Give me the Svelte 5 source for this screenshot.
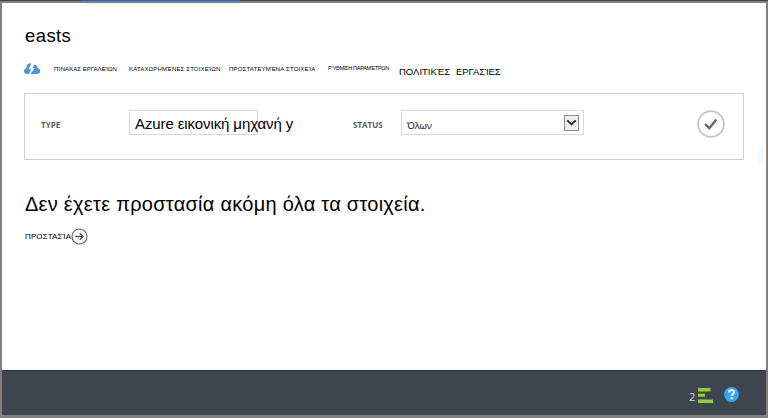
<script>
  const tabs = [
    { label: 'ΠΊΝΑΚΑΣ ΕΡΓΑΛΕΊΩΝ', cls: 'dash' },
    { label: 'ΚΑΤΑΧΩΡΗΜΈΝΕΣ ΣΤΟΙΧΕΊΩΝ', cls: 'registered' },
    { label: 'ΠΡΟΣΤΑΤΕΥΜΈΝΑ ΣΤΟΙΧΕΊΑ', cls: 'protected' },
    { label: 'ΡΎΘΜΙΣΗ ΠΑΡΑΜΈΤΡΩΝ', cls: 'configure' },
    { label: 'ΠΟΛΙΤΙΚΈΣ', cls: 'policies' },
    { label: 'ΕΡΓΑΣΊΕΣ', cls: 'jobs' }
  ];
</script>

<div class="window">
  <div class="strip"><div class="active"></div></div>
  <main>
    <h1><span>easts</span></h1>
    <nav>
      <svg class="cloud" width="17" height="12" viewBox="0 0 17 12">
        <path d="M3.5 11C1.4 11 0 9.9 0 8.2 0 6.6 1.1 5.4 2.4 5.1 2.2 2.4 3.7.4 6 .3L7.4.6 4.6 6.2h2.6L5.3 11Z" fill="#4797d3"/>
        <path d="M6.6 11 10.6 4.9H8.6L10 1.7c2.2-.2 3.6 1.2 3.6 3.3 1.5.4 2.6 1.5 2.6 3.1 0 1.8-1.3 2.9-3.1 2.9Z" fill="#4797d3"/>
      </svg>
      {#each tabs as tab}
        <div class="tab {tab.cls}"><span>{tab.label}</span></div>
      {/each}
    </nav>
    <section class="filters">
      <label class="type" for="type">TYPE</label>
      <div class="field" id="type"><span>Azure εικονική μηχανή y</span></div>
      <div class="status">STATUS</div>
      <div class="select">
        <span>Όλων</span>
        <svg width="15" height="16" viewBox="0 0 15 16">
          <rect x=".5" y=".5" width="14" height="15" fill="#eeeff1" stroke="#8b8b8b"/>
          <path d="M3.3 5.3 7.5 9.3 11.7 5.3" fill="none" stroke="#222" stroke-width="1.8"/>
        </svg>
      </div>
      <svg class="check" width="28" height="28" viewBox="0 0 28 28">
        <circle cx="14" cy="14" r="12.9" fill="#fff" stroke="#c3c3c3" stroke-width="1.7"/>
        <path d="M8.2 14.2 12.3 18.3 19.3 9.5" fill="none" stroke="#666" stroke-width="2.4"/>
      </svg>
      <div class="edge"></div>
    </section>
    <h2><span>Δεν έχετε προστασία ακόμη όλα τα στοιχεία.</span></h2>
    <div class="protect">
      <div><span>ΠΡΟΣΤΑΣΊΑ</span></div>
      <svg width="17" height="17" viewBox="0 0 17 17">
        <circle cx="8.5" cy="8.5" r="7.5" fill="none" stroke="#666" stroke-width="1.2"/>
        <path d="M4.3 8.5h7.4M8.8 5.2l3.2 3.3-3.2 3.3" fill="none" stroke="#555" stroke-width="1.6"/>
      </svg>
    </div>
  </main>
  <footer>
    <span>2</span>
    <svg class="bars" width="15" height="15" viewBox="0 0 15 15">
      <path d="M0 0h12.5v3.4H0ZM0 5.8h7v3H0ZM0 11.5h15V15H0Z" fill="#8fcf3a"/>
    </svg>
    <svg class="help" width="15" height="15" viewBox="0 0 15 15">
      <circle cx="7.5" cy="7.5" r="7.4" fill="#38a5f5"/>
      <path d="M5 5.6C5 3.9 6.1 3.2 7.6 3.2s2.5.8 2.5 2.1c0 1.6-2.4 1.8-2.4 3.8" fill="none" stroke="#fff" stroke-width="1.8"/>
      <rect x="6.7" y="10.2" width="2" height="2" fill="#fff"/>
    </svg>
  </footer>
</div>

<style>
  .window {
    box-sizing: border-box;
    width: 768px;
    height: 418px;
    display: flex;
    flex-direction: column;
    background: #808080;
    color: #000;
    font-family: "Liberation Sans", Arial, sans-serif;
    overflow: hidden;
  }
  .strip { height: 1px; background: #3e4651; flex: none; }
  .active { width: 158px; height: 1px; margin-left: 82px; background: #0f68c8; }
  main {
    height: 367px;
    box-sizing: border-box;
    margin: 2px 2px 0;
    padding: 22px 22px 0;
    background: #fff;
    flex: none;
  }
  span { display: inline-block; white-space: nowrap; }
  h1 { margin: 0 0 0 1px; height: 22px; font-size: 18.5px; line-height: 22px; font-weight: 400; }
  h1 span { letter-spacing: 0.4px; }
  nav { display: flex; height: 23px; padding-top: 15px; }
  .cloud { margin-top: 1px; flex: none; }
  .tab { flex: none; height: 12px; line-height: 12px; font-size: 6px; margin-top: 1px; }
  .dash { width: 75px; margin-left: 13px; letter-spacing: 0.04px; }
  .registered { width: 100px; letter-spacing: 0.16px; }
  .protected { width: 99px; letter-spacing: 0.18px; }
  .configure { width: 71px; font-size: 5.5px; letter-spacing: -0.28px; margin-top: 0; }
  .policies, .jobs { font-size: 9.5px; margin-top: 4px; }
  .policies { width: 57px; }
  .jobs { letter-spacing: -0.05px; }
  .filters {
    position: relative;
    display: flex;
    box-sizing: border-box;
    width: 720px;
    height: 67px;
    margin-top: 8px;
    padding: 16px 0 0 16px;
    border: 1px solid #cfcfcf;
  }
  .edge { position: absolute; left: 733px; top: 53px; width: 6px; height: 17px; background: #f4f9ff; }
  .type, .status {
    font-family: "Open Sans", sans-serif;
    font-size: 8px;
    font-weight: 700;
    line-height: 30px;
    color: #5c5c5c;
  }
  .type { width: 88px; }
  .status { width: 48px; margin-left: 95px; }
  .field, .select { box-sizing: border-box; height: 25px; border: 1px solid #d9d9d9; }
  .field { width: 129px; padding-left: 5px; font-size: 15px; letter-spacing: -0.1px; line-height: 26px; }
  .select { display: flex; width: 183px; padding: 4px 4px 0 5px; justify-content: space-between; }
  .select span { font-family: "Open Sans", sans-serif; font-size: 9.5px; letter-spacing: -0.15px; line-height: 21px; }
  .check { margin-left: 113px; }
  h2 { margin: 32px 0 0 1px; height: 24px; font-size: 20px; letter-spacing: 0.26px; line-height: 24px; font-weight: 400; }
  .protect { display: flex; height: 17px; margin: 12px 0 0 1px; }
  .protect div { width: 46px; font-size: 8px; letter-spacing: 0.1px; line-height: 17px; }
  .protect svg { overflow: visible; }
  footer {
    box-sizing: border-box;
    flex: none;
    display: flex;
    height: 45px;
    margin: 0 2px;
    padding: 16px 0 0 687px;
    border-top: 1px solid #2b333e;
    background: #3d454f;
  }
  footer span { width: 9px; color: #d6d8da; font-family: "Open Sans", sans-serif; font-size: 11px; line-height: 19px; }
  .bars { margin-top: 1px; }
  .help { margin-left: 11px; }
</style>
